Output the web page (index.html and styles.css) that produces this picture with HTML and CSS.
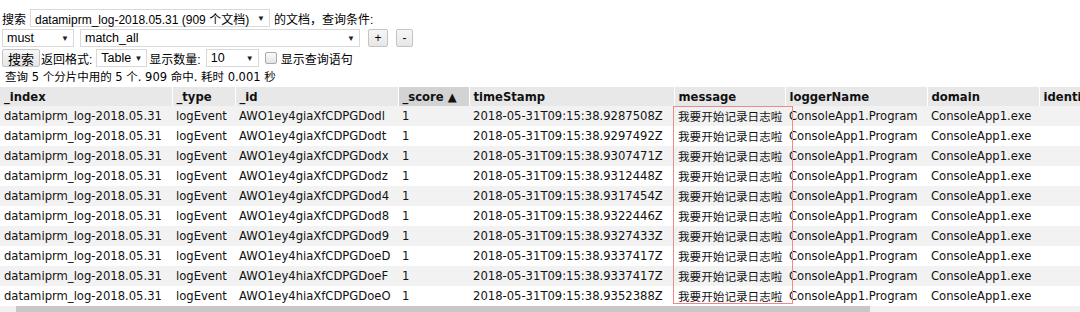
FILE: index.html
```html
<!DOCTYPE html>
<html>
<head>
<meta charset="utf-8">
<link rel="stylesheet" href="styles.css">
</head>
<body>
<div class="page">
  <div class="form-row">
    <span class="lbl">搜索</span>
    <div class="sel sel-index"><span>datamiprm_log-2018.05.31 (909 个文档)</span><i class="arr">▼</i></div>
    <span class="lbl">的文档，查询条件:</span>
  </div>
  <div class="form-row">
    <div class="sel sel-must"><span>must</span><i class="arr">▼</i></div>
    <div class="sel sel-match"><span>match_all</span><i class="arr">▼</i></div>
    <div class="btn btn-plus">+</div>
    <div class="btn btn-minus">-</div>
  </div>
  <div class="form-row">
    <div class="btn btn-search">搜索</div>
    <span class="lbl">返回格式:</span>
    <div class="sel sel-table"><span>Table</span><i class="arr">▼</i></div>
    <span class="lbl lbl-num">显示数量:</span>
    <div class="sel sel-num"><span>10</span><i class="arr">▼</i></div>
    <span class="chk"></span>
    <span class="lbl">显示查询语句</span>
  </div>
  <div class="status">查询 5 个分片中用的 5 个. 909 命中. 耗时 0.001 秒</div>
  <div class="table-wrap">
    <table class="results">
      <colgroup>
        <col class="c-index"><col class="c-type"><col class="c-id"><col class="c-score"><col class="c-ts"><col class="c-msg"><col class="c-logger"><col class="c-domain"><col class="c-ident">
      </colgroup>
      <thead>
        <tr>
          <th>_index</th><th>_type</th><th>_id</th><th class="sorted">_score ▲</th><th>timeStamp</th><th>message</th><th>loggerName</th><th>domain</th><th>identi</th>
        </tr>
      </thead>
      <tbody>
        <tr><td>datamiprm_log-2018.05.31</td><td>logEvent</td><td>AWO1ey4giaXfCDPGDodl</td><td>1</td><td>2018-05-31T09:15:38.9287508Z</td><td>我要开始记录日志啦</td><td>ConsoleApp1.Program</td><td>ConsoleApp1.exe</td><td></td></tr>
        <tr><td>datamiprm_log-2018.05.31</td><td>logEvent</td><td>AWO1ey4giaXfCDPGDodt</td><td>1</td><td>2018-05-31T09:15:38.9297492Z</td><td>我要开始记录日志啦</td><td>ConsoleApp1.Program</td><td>ConsoleApp1.exe</td><td></td></tr>
        <tr><td>datamiprm_log-2018.05.31</td><td>logEvent</td><td>AWO1ey4giaXfCDPGDodx</td><td>1</td><td>2018-05-31T09:15:38.9307471Z</td><td>我要开始记录日志啦</td><td>ConsoleApp1.Program</td><td>ConsoleApp1.exe</td><td></td></tr>
        <tr><td>datamiprm_log-2018.05.31</td><td>logEvent</td><td>AWO1ey4giaXfCDPGDodz</td><td>1</td><td>2018-05-31T09:15:38.9312448Z</td><td>我要开始记录日志啦</td><td>ConsoleApp1.Program</td><td>ConsoleApp1.exe</td><td></td></tr>
        <tr><td>datamiprm_log-2018.05.31</td><td>logEvent</td><td>AWO1ey4giaXfCDPGDod4</td><td>1</td><td>2018-05-31T09:15:38.9317454Z</td><td>我要开始记录日志啦</td><td>ConsoleApp1.Program</td><td>ConsoleApp1.exe</td><td></td></tr>
        <tr><td>datamiprm_log-2018.05.31</td><td>logEvent</td><td>AWO1ey4giaXfCDPGDod8</td><td>1</td><td>2018-05-31T09:15:38.9322446Z</td><td>我要开始记录日志啦</td><td>ConsoleApp1.Program</td><td>ConsoleApp1.exe</td><td></td></tr>
        <tr><td>datamiprm_log-2018.05.31</td><td>logEvent</td><td>AWO1ey4giaXfCDPGDod9</td><td>1</td><td>2018-05-31T09:15:38.9327433Z</td><td>我要开始记录日志啦</td><td>ConsoleApp1.Program</td><td>ConsoleApp1.exe</td><td></td></tr>
        <tr><td>datamiprm_log-2018.05.31</td><td>logEvent</td><td>AWO1ey4hiaXfCDPGDoeD</td><td>1</td><td>2018-05-31T09:15:38.9337417Z</td><td>我要开始记录日志啦</td><td>ConsoleApp1.Program</td><td>ConsoleApp1.exe</td><td></td></tr>
        <tr><td>datamiprm_log-2018.05.31</td><td>logEvent</td><td>AWO1ey4hiaXfCDPGDoeF</td><td>1</td><td>2018-05-31T09:15:38.9337417Z</td><td>我要开始记录日志啦</td><td>ConsoleApp1.Program</td><td>ConsoleApp1.exe</td><td></td></tr>
        <tr><td>datamiprm_log-2018.05.31</td><td>logEvent</td><td>AWO1ey4hiaXfCDPGDoeO</td><td>1</td><td>2018-05-31T09:15:38.9352388Z</td><td>我要开始记录日志啦</td><td>ConsoleApp1.Program</td><td>ConsoleApp1.exe</td><td></td></tr>
      </tbody>
    </table>
    <div class="highlight"></div>
  </div>
  <div class="hscroll"><span class="hs-arrow"></span><span class="hs-thumb"></span></div>
</div>
</body>
</html>
```

FILE: styles.css
```css
html, body {
  margin: 0;
  padding: 0;
  background: #ffffff;
  overflow: hidden;
}
.page {
  width: 1080px;
  height: 312px;
  padding-top: 8px;
  box-sizing: border-box;
  font-family: "Liberation Sans", "Noto Sans CJK SC", sans-serif;
  font-size: 12px;
  color: #000;
}
.form-row {
  display: flex;
  align-items: center;
  height: 20px;
  padding-left: 2px;
}
.lbl {
  font-size: 12px;
  white-space: nowrap;
}
.sel {
  display: flex;
  align-items: center;
  justify-content: space-between;
  height: 18px;
  box-sizing: border-box;
  border: 1px solid #d9d9d9;
  background: #fff;
  font-size: 12.5px;
  padding: 0 4px 0 4px;
  white-space: nowrap;
}
.sel .arr {
  font-style: normal;
  font-size: 8px;
  color: #222;
}
.sel-index { width: 240px; margin: 0 4px 0 4px; font-size: 12px; }
.sel-must { width: 72px; }
.sel-match { width: 280px; margin-left: 6px; }
.sel-table { width: 51px; margin: 0 0 0 4px; }
.lbl-num { margin-left: 2px; }
.sel-num { width: 53px; margin: 0 6px 0 5px; }
.btn {
  display: flex;
  align-items: center;
  justify-content: center;
  height: 18px;
  box-sizing: border-box;
  border: 1px solid #c4c4c4;
  background: linear-gradient(#f7f7f7, #e6e6e6);
  font-size: 12px;
  border-radius: 2px;
}
.btn-plus { width: 20px; margin-left: 8px; }
.btn-minus { width: 17px; margin-left: 8px; }
.btn-search { width: 38px; margin-right: 1px; font-size: 13px; }
.chk {
  display: inline-block;
  width: 10px;
  height: 10px;
  border: 1px solid #aaa;
  border-radius: 2px;
  background: linear-gradient(#fafafa, #e3e3e3);
  margin-right: 4px;
}
.status {
  height: 19px;
  line-height: 19px;
  padding-left: 5px;
  font-family: "DejaVu Sans", "Noto Sans CJK SC", sans-serif;
  font-size: 11.5px;
  white-space: nowrap;
}
.table-wrap {
  position: relative;
  height: 219px;
  overflow: hidden;
}
.results {
  border-collapse: collapse;
  table-layout: fixed;
  width: 1120px;
  font-family: "DejaVu Sans", "Noto Sans CJK SC", sans-serif;
  font-size: 11.6px;
  color: #111;
}
.c-index { width: 172px; }
.c-type { width: 63px; }
.c-id { width: 163px; }
.c-score { width: 71px; }
.c-ts { width: 205px; }
.c-msg { width: 111px; }
.c-logger { width: 142px; }
.c-domain { width: 112px; }
.c-ident { width: 81px; }
.results th {
  height: 19px;
  text-align: left;
  font-weight: bold;
  background: #e8e8e8;
  border-right: 1px solid #ffffff;
  padding: 0 4px;
  white-space: nowrap;
  overflow: hidden;
}
.results th.sorted {
  background: #d3d3d3;
}
.results td {
  height: 20px;
  padding: 0 4px;
  white-space: nowrap;
  overflow: hidden;
}
.results tbody tr:nth-child(odd) td {
  background: #f2f2f2;
}
.highlight {
  position: absolute;
  left: 673px;
  top: 19px;
  width: 120px;
  height: 198px;
  border: 1px solid #f08a8a;
  box-sizing: border-box;
  pointer-events: none;
}
.hscroll {
  display: flex;
  align-items: stretch;
  height: 6px;
  background: #f1f1f1;
}
.hs-arrow {
  width: 16px;
}
.hs-thumb {
  width: 854px;
  background: #c8c8c8;
}
```
